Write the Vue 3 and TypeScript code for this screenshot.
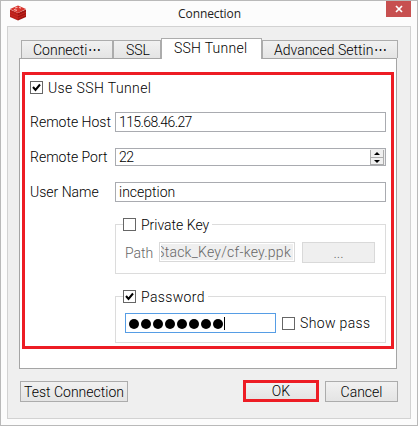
<script setup lang="ts">
import { ref } from 'vue'

interface Tab {
  id: string
  label: string
  more?: boolean
}

const tabs: Tab[] = [
  { id: 'conn', label: 'Connecti', more: true },
  { id: 'ssl', label: 'SSL' },
  { id: 'ssh', label: 'SSH Tunnel' },
  { id: 'adv', label: 'Advanced Settin', more: true },
]
const active = ref('ssh')
const useTunnel = ref(true)
const usePrivateKey = ref(false)
const usePassword = ref(true)
const showPass = ref(false)
const passwordLength = 8
</script>

<template>
  <div class="window">
    <header class="titlebar">
      <svg class="logo" width="18" height="16" viewBox="0 0 18 16">
        <path d="M1 4.5 9 8v7.5L1 12z" fill="#b8201a" />
        <path d="M17 4.5 9 8v7.5l8-3.5z" fill="#a01410" />
        <path d="M9 .5 17 4 9 8 1 4z" fill="#d8352d" />
        <path d="M1 7.2 9 10.7l8-3.5M1 9.8l8 3.5 8-3.5" fill="none" stroke="#cf2a22" stroke-width=".8" />
        <path d="M6 3l2.5-.8M10 2.3l2 .8M5 4.5l3 .8" stroke="#f7b5af" stroke-width="1.2" />
      </svg>
      <h1>Connection</h1>
      <button class="close" aria-label="Close">
        <svg width="8" height="8" viewBox="0 0 8 8"><path d="M1 1l6 6M7 1 1 7" stroke="#fff" stroke-width="1.7" /></svg>
      </button>
    </header>

    <main class="client">
      <nav class="tabs">
        <button v-for="t in tabs" :key="t.id" class="tab" :class="[t.id, { active: t.id === active }]" @click="active = t.id">
          <span>{{ t.label }}</span><span v-if="t.more" class="more">⋯</span>
        </button>
      </nav>

      <section class="pane">
        <div class="highlight">
          <label class="check use" @click="useTunnel = !useTunnel">
            <span class="box"><svg v-if="useTunnel" width="11" height="11" viewBox="0 0 11 11"><path d="M2 5l2.5 3L9 2.5" /></svg></span>
            <span class="t-use">Use SSH Tunnel</span>
          </label>

          <div class="row host"><span class="label">Remote Host</span><div class="input">115.68.46.27</div></div>
          <div class="row port">
            <span class="label">Remote Port</span>
            <div class="input">
              <span>22</span>
              <span class="spin">
                <i><svg width="6" height="3" viewBox="0 0 6 3"><path d="M3 0 6 3H0z" /></svg></i>
                <i><svg width="6" height="3" viewBox="0 0 6 3"><path d="M3 3 6 0H0z" /></svg></i>
              </span>
            </div>
          </div>
          <div class="row user"><span class="label">User Name</span><div class="input">inception</div></div>

          <div class="group key">
            <label class="check legend" @click="usePrivateKey = !usePrivateKey">
              <span class="box"><svg v-if="usePrivateKey" width="11" height="11" viewBox="0 0 11 11"><path d="M2 5l2.5 3L9 2.5" /></svg></span>
              <span class="t-key">Private Key</span>
            </label>
            <div class="content">
              <span class="path">Path</span>
              <div class="input disabled"><div class="clip"><span>Stack_Key/cf-key.ppk</span></div></div>
              <button class="browse">...</button>
            </div>
          </div>

          <div class="group pass">
            <label class="check legend" @click="usePassword = !usePassword">
              <span class="box"><svg v-if="usePassword" width="11" height="11" viewBox="0 0 11 11"><path d="M2 5l2.5 3L9 2.5" /></svg></span>
              <span class="t-pass">Password</span>
            </label>
            <div class="content">
              <div class="input secret">
                <b v-for="n in passwordLength" :key="n" class="dot"></b>
                <span class="caret"></span>
              </div>
              <label class="check show" @click="showPass = !showPass">
                <span class="box"><svg v-if="showPass" width="11" height="11" viewBox="0 0 11 11"><path d="M2 5l2.5 3L9 2.5" /></svg></span>
                <span class="t-show">Show pass</span>
              </label>
            </div>
          </div>
        </div>
      </section>

      <footer class="actions">
        <button class="btn test">Test Connection</button>
        <button class="btn ok">OK</button>
        <button class="btn cancel">Cancel</button>
      </footer>
    </main>
  </div>
</template>

<style>
body {
  overflow: hidden;
}
</style>

<style scoped>
* {
  box-sizing: border-box;
}
.window {
  width: 418px;
  height: 426px;
  padding: 0 6px;
  border: 1px solid #b9b9b9;
  background: #fcfcfc;
  font: 300 14px/18px Roboto, "Liberation Sans", sans-serif;
  color: #000;
  white-space: nowrap;
}
button {
  padding: 0;
  margin: 0;
  border: 0;
  font: inherit;
  color: inherit;
  letter-spacing: inherit;
}
.titlebar {
  display: flex;
  height: 25px;
  padding-left: 2px;
  justify-content: space-between;
}
.logo {
  margin-top: 4px;
}
h1 {
  margin: 4px 0 0 6px;
  font: 12px/18px "Open Sans", sans-serif;
  letter-spacing: -0.1px;
  color: #222;
}
.close {
  display: flex;
  align-items: center;
  justify-content: center;
  width: 25px;
  height: 16px;
  background: #c75050;
}
.client {
  width: 404px;
  height: 393px;
  padding: 11px 11px 0;
  border: 1px solid #d2d2d2;
  background: #efefef;
}
.tabs {
  display: flex;
  align-items: flex-end;
  height: 20px;
  padding-left: 2px;
}
.tab {
  display: flex;
  align-items: center;
  height: 18px;
  border: 1px solid #acacac;
  border-bottom: 0;
  background: linear-gradient(#f1f1f1, #e4e4e4);
}
.conn {
  width: 92px;
  padding-left: 11px;
}
.ssl {
  width: 48px;
  padding-left: 12px;
}
.ssh {
  width: 101px;
  padding-left: 12px;
  letter-spacing: 0.25px;
}
.adv {
  width: 136px;
  padding-left: 11px;
}
.tab.active {
  position: relative;
  height: 21px;
  margin-bottom: -1px;
  padding-bottom: 2px;
  background: #fff;
}
.more {
  width: 12px;
  margin-left: 1px;
  font-family: "DejaVu Sans", sans-serif;
  font-size: 13px;
}
.pane {
  width: 378px;
  height: 311px;
  padding: 13px 2px 0;
  border: 1px solid #a5a5a5;
  background: #fff;
}
.highlight {
  width: 372px;
  height: 277px;
  padding: 6px 5px 0;
  border: 3px solid #ed1c24;
}
.check {
  display: flex;
  align-items: center;
  height: 13px;
}
.box {
  display: flex;
  flex: none;
  width: 13px;
  height: 13px;
  margin-right: 5px;
  border: 1px solid #666;
  background: #fff;
}
.box path {
  fill: none;
  stroke: #000;
  stroke-width: 2;
}
.t-use {
  letter-spacing: 0.4px;
}
.t-pass,
.t-show {
  letter-spacing: 0.35px;
}
.row {
  display: flex;
  align-items: center;
  height: 20px;
}
.label {
  width: 85px;
}
.input {
  display: flex;
  align-items: center;
  width: 271px;
  height: 20px;
  padding-left: 3px;
  border: 1px solid #a9abb0;
  background: #fff;
}
.host {
  margin-top: 18px;
}
.host .input,
.port .input {
  letter-spacing: -0.6px;
}
.port {
  height: 18px;
  margin-top: 16px;
}
.port .input {
  justify-content: space-between;
  height: 18px;
}
.user {
  margin-top: 16px;
}
.spin {
  display: grid;
  grid-template-rows: 8px 7px;
  width: 15px;
  height: 16px;
  padding: 1px 1px 0 0;
  background: #efefef;
}
.spin i {
  display: flex;
  align-items: center;
  justify-content: center;
  border: 1px solid #acacac;
  border-top: 0;
  background: #f0f0f0;
}
.group {
  width: 271px;
  margin-left: 85px;
  border: 1px solid #dcdcdc;
}
.key {
  height: 50px;
  margin-top: 22px;
}
.pass {
  height: 47px;
  margin-top: 22px;
}
.legend {
  width: max-content;
  margin: -7px 0 0 7px;
  padding-right: 3px;
  background: #fff;
}
.content {
  display: flex;
  align-items: center;
}
.key .content {
  height: 21px;
  margin: 11px 0 0 9px;
  color: #666;
}
.path {
  width: 34px;
}
.input.disabled {
  width: 136px;
  height: 20px;
  margin-bottom: 1px;
  padding: 1px;
  border-color: #d9d9d9;
}
.clip {
  display: flex;
  justify-content: flex-end;
  align-items: center;
  width: 100%;
  height: 16px;
  padding-right: 2px;
  overflow: hidden;
  background: #efefef;
  letter-spacing: 0.25px;
}
.browse {
  width: 73px;
  height: 21px;
  margin-left: 7px;
  border: 1px solid #d9d9d9;
  background: #efefef;
}
.pass .content {
  margin: 10px 0 0 9px;
}
.secret {
  width: 151px;
  gap: 2px;
  border-color: #569de5;
}
.dot {
  width: 10px;
  height: 10px;
  margin-top: 2px;
  border-radius: 50%;
  background: #000;
}
.caret {
  width: 1px;
  height: 13px;
  margin-left: -1px;
  background: #000;
}
.show {
  margin-left: 6px;
}
.actions {
  display: flex;
  align-items: flex-start;
  padding: 11px 0 0 1px;
}
.btn {
  height: 21px;
  margin-top: 1px;
  border: 1px solid #acacac;
  background: linear-gradient(#f1f1f1, #e4e4e4);
}
.test {
  width: 108px;
}
.ok {
  width: 76px;
  height: 22px;
  margin: 0 6px 0 115px;
  border: 3px solid #ed1c24;
  line-height: 16px;
}
.cancel {
  width: 73px;
}
</style>
